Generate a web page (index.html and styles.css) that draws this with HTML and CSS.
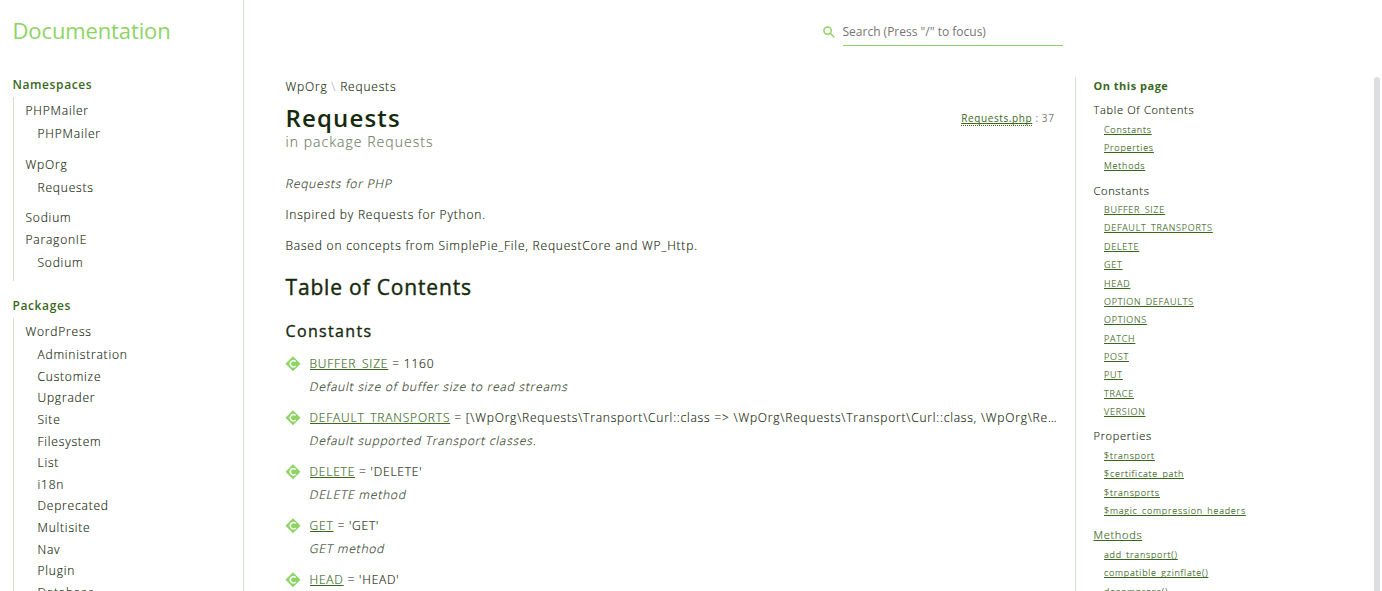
FILE: index.html
```
<!DOCTYPE html>
<html lang="en">
<head>
<meta charset="utf-8">
<title>Documentation</title>
<link rel="stylesheet" href="styles.css">
</head>
<body>
<svg class="defs" width="0" height="0">
  <symbol id="constant" viewBox="0 0 16 16">
    <path class="icon-diamond" d="M8 .3 15.5 7.8 8 15.3.5 7.8Z"/>
    <path class="icon-letter" d="M10.6 5.6A3.1 3.1 0 1 0 10.6 10"/>
  </symbol>
</svg>
<div class="page">
  <aside class="sidebar">
    <h1 class="brand">Documentation</h1>
    <section class="menu">
      <h2 class="menu-title">Namespaces</h2>
      <ul class="menu-list">
        <li>PHPMailer<ul><li>PHPMailer</li></ul></li>
        <li>WpOrg<ul><li>Requests</li></ul></li>
        <li>Sodium</li>
        <li>ParagonIE<ul><li>Sodium</li></ul></li>
      </ul>
    </section>
    <section class="menu">
      <h2 class="menu-title">Packages</h2>
      <ul class="menu-list">
        <li>WordPress<ul>
          <li>Administration</li><li>Customize</li><li>Upgrader</li><li>Site</li><li>Filesystem</li><li>List</li><li>i18n</li><li>Deprecated</li><li>Multisite</li><li>Nav</li><li>Plugin</li><li>Database</li>
        </ul></li>
      </ul>
    </section>
  </aside>
  <div class="main">
    <header class="topbar">
      <label class="search">
        <svg class="search-icon" viewBox="0 0 12 12"><circle cx="4.6" cy="4.6" r="3.7"/><path d="M7.3 7.3 11.3 11.3"/></svg>
        <input class="search-input" type="search" placeholder='Search (Press "/" to focus)'>
      </label>
    </header>
    <div class="columns">
      <main class="content">
        <div class="crumbs">WpOrg <span class="sep">\</span> Requests</div>
        <div class="heading">
          <div>
            <h2 class="title">Requests</h2>
            <div class="package">in package Requests</div>
          </div>
          <div class="source"><a class="source-link">Requests.php</a> : 37</div>
        </div>
        <p class="summary"><span class="slant">Requests for PHP</span></p>
        <p class="para">Inspired by Requests for Python.</p>
        <p class="para">Based on concepts from SimplePie_File, RequestCore and WP_Http.</p>
        <h3 class="toc-title">Table of Contents</h3>
        <h4 class="toc-sub">Constants</h4>
        <dl class="entries">
          <dt><svg class="icon"><use href="#constant"/></svg><span class="entry"><a>BUFFER_SIZE</a> = 1160</span></dt>
          <dd><span class="slant">Default size of buffer size to read streams</span></dd>
          <dt><svg class="icon"><use href="#constant"/></svg><span class="entry"><a>DEFAULT_TRANSPORTS</a> = [\WpOrg\Requests\Transport\Curl::class =&gt; \WpOrg\Requests\Transport\Curl::class, \WpOrg\Requests\Transport\Fsockopen::class]</span></dt>
          <dd><span class="slant">Default supported Transport classes.</span></dd>
          <dt><svg class="icon"><use href="#constant"/></svg><span class="entry"><a>DELETE</a> = 'DELETE'</span></dt>
          <dd><span class="slant">DELETE method</span></dd>
          <dt><svg class="icon"><use href="#constant"/></svg><span class="entry"><a>GET</a> = 'GET'</span></dt>
          <dd><span class="slant">GET method</span></dd>
          <dt><svg class="icon"><use href="#constant"/></svg><span class="entry"><a>HEAD</a> = 'HEAD'</span></dt>
        </dl>
      </main>
      <nav class="onpage">
        <h5 class="onpage-title">On this page</h5>
        <div class="group">Table Of Contents</div>
        <ul class="links"><li><a>Constants</a></li><li><a>Properties</a></li><li><a>Methods</a></li></ul>
        <div class="group">Constants</div>
        <ul class="links"><li><a>BUFFER_SIZE</a></li><li><a>DEFAULT_TRANSPORTS</a></li><li><a>DELETE</a></li><li><a>GET</a></li><li><a>HEAD</a></li><li><a>OPTION_DEFAULTS</a></li><li><a>OPTIONS</a></li><li><a>PATCH</a></li><li><a>POST</a></li><li><a>PUT</a></li><li><a>TRACE</a></li><li><a>VERSION</a></li></ul>
        <div class="group">Properties</div>
        <ul class="links"><li><a>$transport</a></li><li><a>$certificate_path</a></li><li><a>$transports</a></li><li><a>$magic_compression_headers</a></li></ul>
        <div class="group"><a>Methods</a></div>
        <ul class="links"><li><a>add_transport()</a></li><li><a>compatible_gzinflate()</a></li><li><a>decompress()</a></li></ul>
      </nav>
      <div class="scroll-thumb"></div>
    </div>
  </div>
</div>
</body>
</html>
```
FILE: styles.css
```
* { box-sizing: border-box; }
body { margin: 0; height: 591px; overflow: hidden; background: #fff; color: #17290d; font-family: "Open Sans", sans-serif; font-weight: 300; font-size: 12px; letter-spacing: 0.8px; line-height: 21.6px; -webkit-text-stroke: 0.15px; }
h1, h2, h3, h4, h5, p, ul, dl, dd { margin: 0; padding: 0; }
ul { list-style: none; }
a { color: #3a681d; text-decoration: underline; text-decoration-skip-ink: none; }
.defs { position: absolute; }
.page { display: flex; height: 591px; overflow: hidden; }
.sidebar { width: 244px; flex: none; padding: 0 0 0 12.5px; border-right: 1px solid #d4e3ca; }
.brand { color: #8ed464; font-size: 22px; font-weight: 400; letter-spacing: -0.12px; line-height: 30px; padding-top: 15px; margin-bottom: 29px; -webkit-text-stroke: 0; }
.menu { margin-bottom: 14px; }
.menu-title { color: #3a681d; font-size: 12px; font-weight: 600; letter-spacing: 0.6px; line-height: 22px; -webkit-text-stroke: 0; }
.menu-list { margin: 1px 0 0 0.5px; padding: 3px 0 0 11.5px; border-left: 1px solid #d4e3ca; }
.menu-list ul { padding: 1.7px 0 8.7px 12px; }
.menu-list > li:last-child > ul { padding-bottom: 7.3px; }
.main { flex: 1; display: flex; flex-direction: column; min-width: 0; }
.topbar { height: 77px; flex: none; padding: 18px 0 0 579px; }
.search { display: flex; width: 240px; align-items: center; gap: 8px; }
.search-icon { width: 12px; height: 12px; flex: none; fill: none; stroke: #8ed464; stroke-width: 1.5; }
.search-input { width: 220px; height: 28px; border: 0; border-bottom: 1px solid #8ed464; padding: 0; outline: 0; background: none; font: 400 12px "Open Sans", sans-serif; letter-spacing: 0; text-indent: -0.5px; -webkit-text-stroke: 0; }
.search-input::placeholder { color: #757575; }
.columns { flex: 1; display: flex; min-height: 0; }
.content { width: 831px; flex: none; padding: 0 11.5px 0 41.5px; }
.crumbs { line-height: 20px; }
.sep { color: #bbb; }
.heading { display: flex; justify-content: space-between; padding-right: 9px; }
.title { font-size: 24px; font-weight: 600; letter-spacing: 1.15px; line-height: 34px; padding-top: 4px; -webkit-text-stroke: 0; }
.package { color: #6f7b68; font-size: 14px; letter-spacing: 1.04px; line-height: 14px; }
.source { font-size: 10px; font-weight: 400; color: #777; letter-spacing: 0.6px; padding-top: 11px; -webkit-text-stroke: 0; }
.source-link { border-bottom: 1px dotted #3a681d; }
.summary { color: #35442c; margin: 24px 0 9.4px; }
.slant { display: inline-block; transform: skewX(-12deg); }
.para { margin-bottom: 9.4px; }
.toc-title { font-size: 21px; font-weight: 500; letter-spacing: 0.83px; line-height: 30px; margin-top: 15px; -webkit-text-stroke: 0.4px; }
.toc-sub { font-size: 16px; font-weight: 500; letter-spacing: 1.35px; line-height: 24px; margin: 17px 0 10px; -webkit-text-stroke: 0.35px; }
.entries dt { display: flex; align-items: center; gap: 8.5px; height: 22px; margin-left: -0.5px; }
.entries dd { padding-left: 24px; height: 22px; margin: 1px 0 9.05px; color: #35442c; }
.icon { width: 16px; height: 16px; flex: none; }
.icon-diamond { fill: #8ed464; }
.icon-letter { fill: none; stroke: #fff; stroke-width: 1.4; }
.entry { overflow: hidden; text-overflow: ellipsis; white-space: nowrap; }
.onpage { width: 299px; flex: none; padding-left: 17.5px; border-left: 1px solid #d4e3ca; overflow: hidden; }
.onpage-title { color: #3a681d; font-size: 11px; font-weight: 700; letter-spacing: 0.5px; line-height: 18px; margin-bottom: 5px; -webkit-text-stroke: 0; }
.group { font-size: 11px; letter-spacing: 0.7px; line-height: 20px; }
.links { padding: 0.5px 0 5.1px 10.5px; font-size: 9px; line-height: 18.34px; letter-spacing: 0.78px; }
.scroll-thumb { width: 6px; height: 600px; background: #dcdee0; border-radius: 3px; }
```
